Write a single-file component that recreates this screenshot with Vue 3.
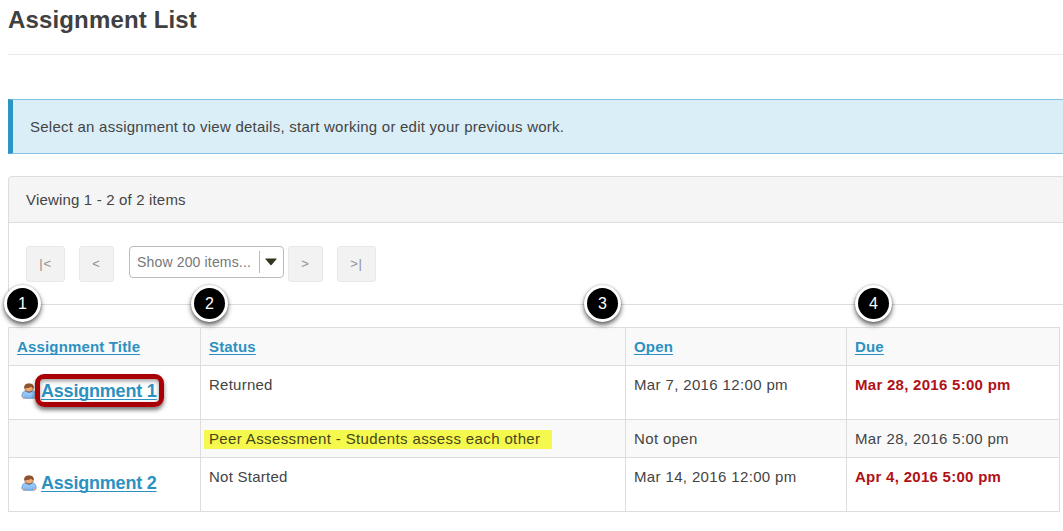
<script setup>
const columns = ['Assignment Title', 'Status', 'Open', 'Due']
const rows = [
  { title: 'Assignment 1', status: 'Returned', open: 'Mar 7, 2016 12:00 pm', due: 'Mar 28, 2016 5:00 pm', marked: true, bold: true },
  { title: '', status: 'Peer Assessment - Students assess each other', open: 'Not open', due: 'Mar 28, 2016 5:00 pm', peer: true },
  { title: 'Assignment 2', status: 'Not Started', open: 'Mar 14, 2016 12:00 pm', due: 'Apr 4, 2016 5:00 pm', bold: true },
]
</script>

<template>
  <main class="page">
    <h1>Assignment List</h1>
    <div class="notice">Select an assignment to view details, start working or edit your previous work.</div>

    <section class="panel">
      <header class="panel-head"><span class="viewing">Viewing 1 - 2 of 2 items</span></header>
      <div class="pager">
        <button class="edge">|&lt;</button>
        <button class="step prev">&lt;</button>
        <div class="select">
          <span class="select-label">Show 200 items...</span>
          <svg class="arrow" width="12" height="8" viewBox="0 0 12 8"><path d="M1 .5h10q1 0 .4.8L6.8 6.8q-.8.9-1.6 0L.6 1.3Q0 .5 1 .5z" fill="#35351f" /></svg>
        </div>
        <button class="step">&gt;</button>
        <button class="edge last">&gt;|</button>
      </div>
    </section>

    <div class="table">
      <div class="row head">
        <div v-for="(name, i) in columns" :key="name" class="cell">
          <a class="head-link">{{ name }}</a>
          <span class="badge" :class="'b' + i">{{ i + 1 }}</span>
        </div>
      </div>
      <div v-for="(r, i) in rows" :key="i" class="row" :class="r.peer ? 'peer' : 'tall'">
        <div class="cell title-cell">
          <template v-if="r.title">
            <svg class="user" width="16" height="16" viewBox="0 0 16 16">
              <path d="M3 15.2C1.2 14.8.7 13.6 1 12c.4-2.6 1.9-4.1 4.2-4.5h5.6c2.4.4 3.9 1.9 4.3 4.5.2 1.6-.4 2.8-2.2 3.2z" fill="#93c5f6" stroke="#5a8fce" stroke-width=".8" />
              <path d="M4.2 12.5v2.4h7.6v-2.4" fill="#86bcf5" stroke="#5b91d0" stroke-width=".5" />
              <path d="M1.4 13.8q1.5-.7 2.4.4v1.3H2.3zM12.2 14.2q1-1.1 2.4-.4l-.9 1.7h-1.5z" fill="#e5a07a" />
              <path d="M3.7 4.6c0 3 1.9 4.4 4.3 4.4s4.3-1.4 4.3-4.4C12.3 2.2 10.4 1.2 8 1.2S3.700 2.200 3.700 4.600z" fill="#f0ad7b" stroke="#a1653e" stroke-width=".7" />
              <path d="M3.300 5.200C2.900 1.900 4.900.5 8 .5s5.100 1.400 4.700 4.700c-1.300 0-2-.8-2.500-1.500C8.300 4.800 5.500 5.200 3.300 5.200z" fill="#8b5330" />
              <path d="M5.200 8.300q2.800 1.900 5.600 0" fill="none" stroke="#4a5870" stroke-width=".8" />
            </svg>
            <a class="title-link">{{ r.title }}</a>
            <span v-if="r.marked" class="marker"></span>
          </template>
        </div>
        <div class="cell"><span class="status" :class="{ highlight: r.peer }">{{ r.status }}</span></div>
        <div class="cell"><span class="date">{{ r.open }}</span></div>
        <div class="cell"><span class="date" :class="{ due: r.bold }">{{ r.due }}</span></div>
      </div>
    </div>
  </main>
</template>

<style>
body { background: #fff; overflow: hidden; }
</style>

<style scoped>
* { box-sizing: border-box; }
.page {
  height: 531px; padding-left: 8px; overflow: hidden; white-space: nowrap;
  font: 15px/20px "Liberation Sans", Arial, sans-serif; letter-spacing: .3px; color: #444;
}
h1 {
  margin: 0; height: 55px; padding-top: 5px; border-bottom: 1px solid #e9e9e9;
  font-size: 24px; line-height: 30px; letter-spacing: .15px; color: #404040;
}
.notice {
  height: 55px; margin-top: 44px; padding: 17px 0 0 17px; background: #d9eef7; letter-spacing: .24px;
  border: 1px solid #81c2e2; border-left: 5px solid #2c95c3; border-right: 0;
}
.panel { height: 129px; margin-top: 22px; border: 1px solid #ddd; border-right: 0; border-radius: 4px 0 0 0; }
.panel-head { height: 46px; padding: 13px 0 0 17px; background: #f5f5f5; border-bottom: 1px solid #ddd; border-radius: 3px 0 0 0; }
.viewing { letter-spacing: .17px; }
.pager { display: flex; align-items: flex-start; padding: 23px 0 0 17px; }
button {
  height: 36px; padding: 0; border: 1px solid #e8e8e8; border-radius: 3px; background: #f2f2f2;
  font: 13px/34px "Liberation Sans", Arial, sans-serif; color: #909090; letter-spacing: .8px;
}
.edge { width: 39px; }
.step { width: 35px; }
.prev { margin: 0 15px 0 14px; }
.last { margin-left: 14px; }
.select {
  display: flex; align-items: center; width: 155px; height: 32px; margin-right: 4px; padding-left: 7px;
  border: 1px solid #bbb; border-radius: 4px; background: #fff; color: #777;
}
.select-label { width: 123px; height: 22px; border-right: 1px solid #bbb; font-size: 14px; letter-spacing: .16px; line-height: 23px; }
.arrow { margin-left: 5px; }
.table { width: 1052px; margin-top: 22px; border: 1px solid #ddd; border-bottom: 0; }
.row { display: grid; grid-template-columns: 192px 425px 221px 212px; border-bottom: 1px solid #ddd; }
.head, .peer { height: 38px; background: #f9f9f9; }
.tall { height: 54px; }
.cell { position: relative; padding: 9px 0 0 8px; border-right: 1px solid #ddd; }
.cell:last-child { border-right: 0; }
.head-link, .title-link { color: #2c91c1; font-weight: bold; text-decoration: underline; text-underline-offset: 2px; text-decoration-thickness: 1px; text-decoration-skip-ink: none; }
.head-link { letter-spacing: .16px; }
.title-cell { display: flex; padding: 15px 0 0 12px; }
.user { margin: 2px 4px 0 0; }
.title-link { font-size: 18px; letter-spacing: -.2px; }
.status { letter-spacing: .25px; }
.date { letter-spacing: .36px; }
.date.due { color: #b01116; font-weight: bold; letter-spacing: .28px; }
.highlight { display: block; width: 348px; height: 19px; margin: 1px 0 0 -5px; padding-left: 5px; background: #f6f94d; color: #45451c; line-height: 18px; letter-spacing: .37px; }
.marker { position: absolute; left: 26px; top: 8px; width: 129px; height: 33px; border: 5px solid #a90006; border-radius: 9px; box-shadow: 0 3px 4px #0008, inset 0 2px 4px #0006; }
.badge {
  position: absolute; top: -43px; width: 37px; height: 37px; border: 3px solid #fff; border-radius: 50%;
  background: #000; color: #fff; font-size: 16px; line-height: 31px; letter-spacing: 0; text-align: center;
  box-shadow: 0 3px 5px #0009, 0 0 2px #0005;
}
.b0 { left: -5px; }
.b1 { left: -10px; }
.b2 { left: -42px; }
.b3 { left: 8px; }
</style>
